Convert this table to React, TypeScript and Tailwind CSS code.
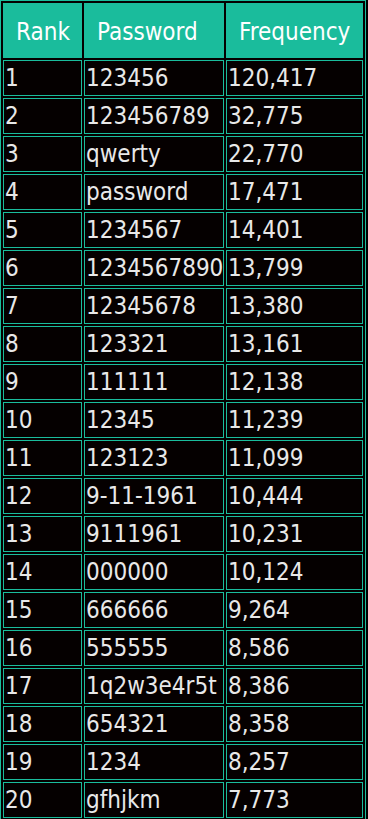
const rows: [string, string, string][] = [
  ['1', '123456', '120,417'],
  ['2', '123456789', '32,775'],
  ['3', 'qwerty', '22,770'],
  ['4', 'password', '17,471'],
  ['5', '1234567', '14,401'],
  ['6', '1234567890', '13,799'],
  ['7', '12345678', '13,380'],
  ['8', '123321', '13,161'],
  ['9', '111111', '12,138'],
  ['10', '12345', '11,239'],
  ['11', '123123', '11,099'],
  ['12', '9-11-1961', '10,444'],
  ['13', '9111961', '10,231'],
  ['14', '000000', '10,124'],
  ['15', '666666', '9,264'],
  ['16', '555555', '8,586'],
  ['17', '1q2w3e4r5t', '8,386'],
  ['18', '654321', '8,358'],
  ['19', '1234', '8,257'],
  ['20', 'gfhjkm', '7,773'],
];

export default function App() {
  return (
    <div className="min-h-screen bg-black">
      <table className="w-[366px] table-fixed border-separate border-spacing-[2px] border border-[#1abc9c] bg-[#050000] font-['DejaVu_Sans_Condensed','DejaVu_Sans',sans-serif] text-[24px] leading-none">
        <thead>
          <tr>
            <th className="h-[55px] w-[79px] border border-[#1abc9c] bg-[#1abc9c] px-3 pt-0.5 text-left font-normal text-white">Rank</th>
            <th className="h-[55px] w-[140px] border border-[#1abc9c] bg-[#1abc9c] px-3 pt-0.5 text-left font-normal text-white">Password</th>
            <th className="h-[55px] w-[137px] border border-[#1abc9c] bg-[#1abc9c] px-3 pt-0.5 text-left font-normal text-white">Frequency</th>
          </tr>
        </thead>
        <tbody>
          {rows.map(([rank, pw, freq]) => (
            <tr key={rank}>
              <td className="h-[36px] border border-[#1abc9c] px-px text-[#e8e8e8]">{rank}</td>
              <td className="h-[36px] overflow-hidden border border-[#1abc9c] px-px whitespace-nowrap text-[#e8e8e8]">{pw}</td>
              <td className="h-[36px] border border-[#1abc9c] px-px text-[#e8e8e8]">{freq}</td>
            </tr>
          ))}
        </tbody>
      </table>
    </div>
  );
}
